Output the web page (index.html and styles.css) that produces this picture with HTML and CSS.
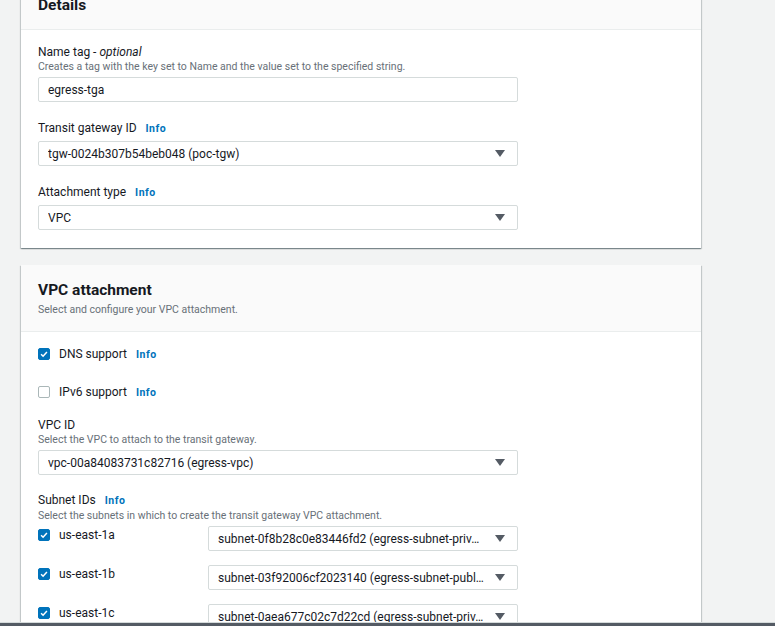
FILE: index.html
```html
<!DOCTYPE html>
<html lang="en">
<head>
  <meta charset="UTF-8" />
  <meta name="viewport" content="width=device-width, initial-scale=1.0" />
  <title>Create transit gateway attachment</title>
  <link rel="stylesheet" href="styles.css">
</head>
<body>
  <main class="page">
    <section class="card">
      <div class="card-header">
        <h2>Details</h2>
      </div>
      <div class="card-body">
        <div class="field">
          <div class="field-label">Name tag - <i>optional</i></div>
          <div class="field-desc">Creates a tag with the key set to Name and the value set to the specified string.</div>
          <div class="control"><span class="control-text">egress-tga</span></div>
        </div>

        <div class="field">
          <div class="field-label">Transit gateway ID <a class="info" href="#">Info</a></div>
          <div class="control select">
            <span class="control-text">tgw-0024b307b54beb048 (poc-tgw)</span>
            <svg class="caret" viewBox="0 0 10 7"><path d="M0 0h10L5 7z"/></svg>
          </div>
        </div>

        <div class="field">
          <div class="field-label">Attachment type <a class="info" href="#">Info</a></div>
          <div class="control select">
            <span class="control-text">VPC</span>
            <svg class="caret" viewBox="0 0 10 7"><path d="M0 0h10L5 7z"/></svg>
          </div>
        </div>
      </div>
    </section>

    <section class="card">
      <div class="card-header">
        <h2>VPC attachment</h2>
        <div class="card-sub">Select and configure your VPC attachment.</div>
      </div>
      <div class="card-body">
        <label class="check-row">
          <span class="checkbox checked"><svg viewBox="0 0 12 12"><path d="M2.5 6.2l2.4 2.4 4.6-5"/></svg></span>
          <span>DNS support</span>
          <a class="info" href="#">Info</a>
        </label>
        <label class="check-row">
          <span class="checkbox"></span>
          <span>IPv6 support</span>
          <a class="info" href="#">Info</a>
        </label>

        <div class="field">
          <div class="field-label">VPC ID</div>
          <div class="field-desc">Select the VPC to attach to the transit gateway.</div>
          <div class="control select">
            <span class="control-text">vpc-00a84083731c82716 (egress-vpc)</span>
            <svg class="caret" viewBox="0 0 10 7"><path d="M0 0h10L5 7z"/></svg>
          </div>
        </div>

        <div class="field subnet-field">
          <div class="field-label">Subnet IDs <a class="info" href="#">Info</a></div>
          <div class="field-desc">Select the subnets in which to create the transit gateway VPC attachment.</div>
          <div class="subnets">
            <div class="subnet">
              <label class="subnet-zone">
                <span class="checkbox checked"><svg viewBox="0 0 12 12"><path d="M2.5 6.2l2.4 2.4 4.6-5"/></svg></span>
                us-east-1a
              </label>
              <div class="control select">
                <span class="control-text">subnet-0f8b28c0e83446fd2 (egress-subnet-priv…</span>
                <svg class="caret" viewBox="0 0 10 7"><path d="M0 0h10L5 7z"/></svg>
              </div>
            </div>
            <div class="subnet">
              <label class="subnet-zone">
                <span class="checkbox checked"><svg viewBox="0 0 12 12"><path d="M2.5 6.2l2.4 2.4 4.6-5"/></svg></span>
                us-east-1b
              </label>
              <div class="control select">
                <span class="control-text">subnet-03f92006cf2023140 (egress-subnet-publ…</span>
                <svg class="caret" viewBox="0 0 10 7"><path d="M0 0h10L5 7z"/></svg>
              </div>
            </div>
            <div class="subnet">
              <label class="subnet-zone">
                <span class="checkbox checked"><svg viewBox="0 0 12 12"><path d="M2.5 6.2l2.4 2.4 4.6-5"/></svg></span>
                us-east-1c
              </label>
              <div class="control select">
                <span class="control-text">subnet-0aea677c02c7d22cd (egress-subnet-priv…</span>
                <svg class="caret" viewBox="0 0 10 7"><path d="M0 0h10L5 7z"/></svg>
              </div>
            </div>
          </div>
        </div>
      </div>
    </section>
  </main>

  <div class="status-edge"></div>
</body>
</html>
```

FILE: styles.css
```css
/* Base */
* {
  margin: 0;
  padding: 0;
  box-sizing: border-box;
}

html, body {
  height: 100%;
  overflow: hidden;
}

body {
  background: #f2f3f3;
  color: #16191f;
  font-family: Roboto, 'Liberation Sans', Arial, sans-serif;
  font-size: 12px;
}

.page {
  margin: -20px 0 0 21px;
  width: 680px;
}

/* Cards */
.card {
  background: #fff;
  box-shadow: 0 1px 1px 0 rgba(0, 28, 36, 0.3),
              1px 1px 1px 0 rgba(0, 28, 36, 0.15),
              -1px 1px 1px 0 rgba(0, 28, 36, 0.15);
  margin-bottom: 17px;
}

.card-header {
  background: #fafafa;
  border-bottom: 1px solid #eaeded;
  padding: 15px 17px 14px;
}

.card-header h2 {
  font-size: 15.5px;
  line-height: 20px;
  font-weight: 700;
}

.card-sub {
  margin-top: 3px;
  font-size: 10.5px;
  line-height: 14px;
  color: #687078;
}

.card-body {
  padding: 14px 17px 18px;
}

/* Form fields */
.field + .field {
  margin-top: 18px;
}

.check-row + .field,
.field + .subnet-field {
  margin-top: 17px;
}

.field-label {
  line-height: 16px;
}

.field-label i {
  font-style: italic;
}

.field-desc {
  font-size: 10.5px;
  line-height: 13px;
  color: #687078;
}

.info {
  color: #0073bb;
  font-size: 10.5px;
  font-weight: 700;
  letter-spacing: 0.5px;
  text-decoration: none;
  margin-left: 6px;
}

.control {
  display: flex;
  align-items: center;
  width: 480px;
  height: 25px;
  margin-top: 4px;
  padding: 0 12px 0 9px;
  border: 1px solid #d5dbdb;
  border-radius: 2px;
  background: #fff;
}

.control-text {
  flex: 1;
  min-width: 0;
  white-space: nowrap;
  overflow: hidden;
  text-overflow: ellipsis;
}

.caret {
  width: 10px;
  height: 7px;
  margin-left: 4px;
  fill: #545b64;
  flex: none;
}

/* Checkboxes */
.check-row {
  display: flex;
  align-items: center;
  height: 16px;
}

.check-row + .check-row {
  margin-top: 22px;
}

.check-row .info {
  margin-left: 9px;
}

.checkbox {
  width: 12px;
  height: 12px;
  border: 1px solid #aab7b8;
  border-radius: 2px;
  margin-right: 9px;
  flex: none;
  background: #fff;
}

.checkbox.checked {
  background: #0073bb;
  border-color: #0073bb;
}

.checkbox svg {
  display: block;
  width: 10px;
  height: 10px;
  fill: none;
  stroke: #fff;
  stroke-width: 1.8;
}

/* Subnet rows */
.subnets {
  margin-top: 4px;
}

.subnet {
  display: flex;
  align-items: flex-start;
}

.subnet + .subnet {
  margin-top: 14px;
}

.subnet-zone {
  display: flex;
  align-items: center;
  width: 170px;
  height: 16px;
  margin-top: 1px;
}

.subnet .control {
  width: 310px;
  margin-top: 0;
}

.status-edge {
  position: fixed;
  left: 0;
  right: 0;
  bottom: 0;
  height: 4px;
  border-top: 1px solid #d5dbdb;
  background: #545b64;
}
```
